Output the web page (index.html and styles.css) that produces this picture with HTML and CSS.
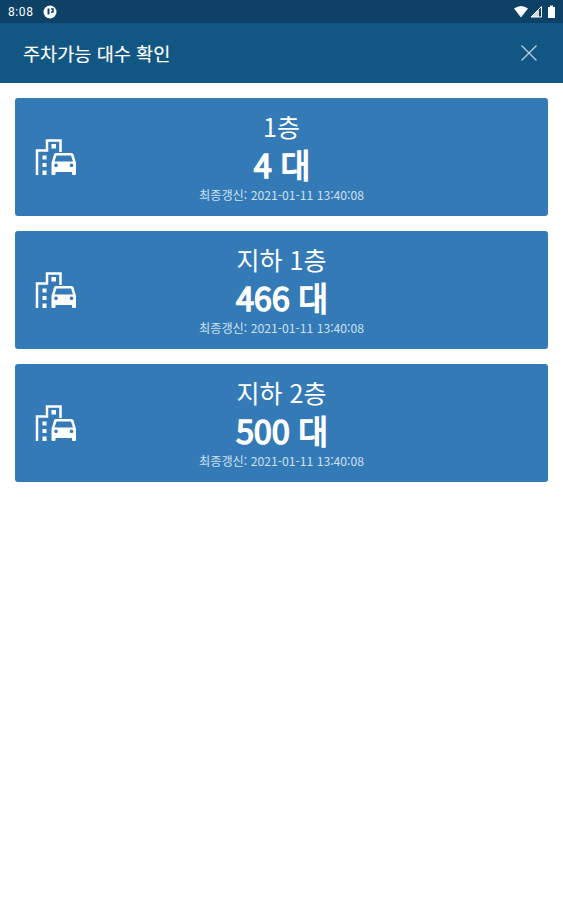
FILE: index.html
```html
<!DOCTYPE html>
<html lang="ko">
<head>
<meta charset="utf-8">
<title>주차가능 대수 확인</title>
<link rel="stylesheet" href="styles.css">
</head>
<body>
<svg class="defs" width="0" height="0">
  <symbol id="parking" viewBox="0 0 42 38">
    <path d="M2 37V12.500H12V2.500H25.500V14" fill="none" stroke="currentColor" stroke-width="2.500"/>
    <path d="M16.500 6h4.500v4.500H16.500zM7.500 17.500h4v4h-4zM7.500 25h4v4h-4zM7.500 32.500h4V37h-4z" fill="currentColor"/>
    <path fill="currentColor" fill-rule="evenodd" d="M20.500 15h16q1.500 0 2 1.500L41 25V36q0 1-1 1H38q-1 0-1-1V34H20.500v2q0 1-1 1H17.500q-1 0-1-1V25L19 16.500q.4-1.500 1.500-1.500zM21.500 17.500 19.500 23.500H38L36 17.500zM21 25.500a1.800 1.800 0 1 0 .01 0zM36.500 25.500a1.800 1.800 0 1 0 .01 0z"/>
  </symbol>
</svg>
<div class="status">
  <span class="clock">8:08</span>
  <svg class="app" viewBox="0 0 14 14"><circle cx="7" cy="7" r="6.500" fill="#fff"/><path d="M4.500 3.500h2v6h-2z" fill="#0d4166"/><path d="M8 4h2v3H8" fill="none" stroke="#0d4166" stroke-width="1.500"/></svg>
  <svg class="system" viewBox="0 0 44 14"><path d="M0 3.500Q7 -1.500 14 3.500L7 12.500z" fill="#fff"/><path d="M17 12L27.500 1.500V12z" fill="none" stroke="#fff"/><path d="M17 12L25 4V12z" fill="#fff" fill-opacity=".8"/><path d="M34 2h2V.5h3V2h2v11h-7z" fill="#fff"/></svg>
</div>
<header class="header"><h1>주차가능 대수 확인</h1>
  <svg class="close" viewBox="0 0 16 16"><path d="M.5 .5l15 15m0-15l-15 15" stroke="#bdd0de" stroke-width="1.300"/></svg>
</header>
<main class="list">
  <section class="card"><svg class="icon"><use href="#parking"/></svg><h2>1층</h2><strong>4 대</strong><p>최종갱신: 2021-01-11 13:40:08</p></section>
  <section class="card"><svg class="icon"><use href="#parking"/></svg><h2>지하 1층</h2><strong>466 대</strong><p>최종갱신: 2021-01-11 13:40:08</p></section>
  <section class="card"><svg class="icon"><use href="#parking"/></svg><h2>지하 2층</h2><strong>500 대</strong><p>최종갱신: 2021-01-11 13:40:08</p></section>
</main>
</body>
</html>
```
FILE: styles.css
```css
* { box-sizing: border-box; }
body { margin: 0; background: #fff; color: #fff; font-family: "Noto Sans CJK KR", sans-serif; }
.defs { position: absolute; }
.status { height: 23px; background: #0d4166; display: flex; align-items: center; padding: 1px 5px 0 8px; }
.clock { font: 12px/22px Roboto, sans-serif; letter-spacing: .6px; }
.app { width: 14px; height: 14px; margin-left: 9px; }
.system { width: 44px; height: 14px; margin-left: auto; }
.header { height: 60px; background: #125783; display: flex; align-items: center; justify-content: space-between; padding: 0 26px 0 23px; }
h1 { margin: 0; font-size: 18.6px; font-weight: 400; line-height: 26px; -webkit-text-stroke: .15px #fff; }
.close { width: 16px; height: 16px; }
.list { display: grid; gap: 15px; padding: 15px 15px 0; }
.card { position: relative; height: 118px; background: #337ab7; border-radius: 3px; display: flex; flex-direction: column; align-items: center; padding-top: 11px; }
.icon { position: absolute; left: 20px; top: 40px; width: 42px; height: 38px; }
h2 { margin: 0; font-size: 25px; font-weight: 400; line-height: 35px; }
strong { padding-left: 1px; font-size: 32.5px; letter-spacing: -.25px; font-weight: 400; line-height: 39px; -webkit-text-stroke: 1.5px #fff; }
p { margin: 2px 0 0; font-size: 12.2px; line-height: 20px; color: #cfe0f0; }
```
